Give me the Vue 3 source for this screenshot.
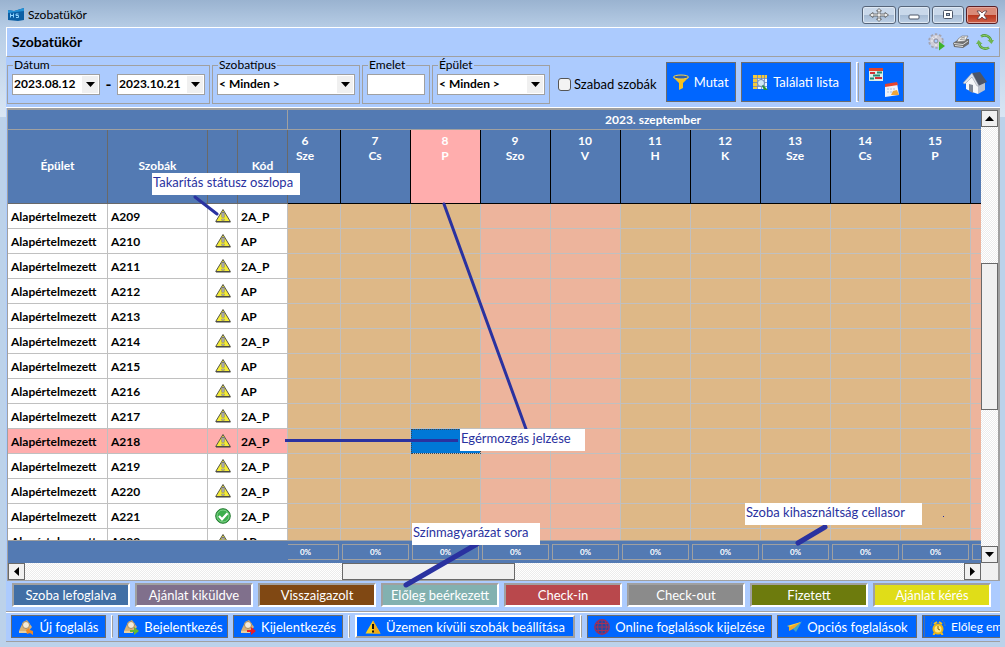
<script setup>
const days = [
  { n: 6, d: 'Sze' }, { n: 7, d: 'Cs' }, { n: 8, d: 'P' }, { n: 9, d: 'Szo', weekend: true },
  { n: 10, d: 'V', weekend: true }, { n: 11, d: 'H' }, { n: 12, d: 'K' }, { n: 13, d: 'Sze' },
  { n: 14, d: 'Cs' }, { n: 15, d: 'P' }, { n: 16, d: 'Szo', weekend: true },
]
const codes = ['2A_P', 'AP', '2A_P', 'AP', 'AP', '2A_P', 'AP', 'AP', '2A_P', '2A_P', '2A_P', '2A_P', '2A_P', 'AP']
const rooms = codes.map((code, i) => ({ name: 'A' + (209 + i), code, clean: i === 12 }))
const hoverRoom = 'A218'
const hoverDay = 8
const legend = [
  ['Szoba lefoglalva', 'booked'], ['Ajánlat kiküldve', 'offer'], ['Visszaigazolt', 'confirmed'],
  ['Előleg beérkezett', 'deposit'], ['Check-in', 'checkin'], ['Check-out', 'checkout'],
  ['Fizetett', 'paid'], ['Ajánlat kérés', 'request'],
]
</script>

<template>
  <div class="window">
    <header class="titlebar">
      <svg class="logo" viewBox="0 0 16 16" width="16" height="16">
        <path d="M0 3l6 1 10-3v12l-6 1-10-1z" fill="#0b5fa5" /><path d="M0 3l6 1 10-3v3L0 6z" fill="#2391d6" />
        <path d="M2.500 6.500v4M5.500 6.500v4M2.500 8.500h3M10.500 7H8v1.500h2.500V10.500H8" fill="none" stroke="#8fd4ff" />
      </svg>
      <span class="caption">Szobatükör</span>
      <button class="wbtn" aria-label="Mozgatás">
        <svg viewBox="0 0 20 14" width="20" height="14"><path d="M10 .5l2.500 2.500H11v3h5V4.500L19.500 7 16 9.500V8h-5v3h1.500L10 13.500 7.500 11H9V8H4v1.500L.5 7 4 4.500V6h5V3H7.500z" fill="#eee" stroke="#555" stroke-width=".8" /></svg>
      </button>
      <button class="wbtn" aria-label="Kis méret">
        <svg viewBox="0 0 12 12" width="12" height="12"><rect x="1" y="6" width="10" height="4" rx="1" fill="#fff" stroke="#4c5668" /></svg>
      </button>
      <button class="wbtn" aria-label="Teljes méret">
        <svg viewBox="0 0 12 12" width="12" height="12"><rect x="1.500" y="1.500" width="9" height="8" rx="1" fill="#fff" stroke="#4c5668" /><rect x="4.500" y="4.500" width="3" height="2" fill="#a9bdd6" stroke="#4c5668" /></svg>
      </button>
      <button class="wbtn close" aria-label="Bezárás">
        <svg viewBox="0 0 12 12" width="12" height="12"><path d="M1 2h3l2 2 2-2h3L8 6l3 4H8L6 8l-2 2H1l3-4z" fill="#fff" stroke="#5b3a40" stroke-width=".8" /></svg>
      </button>
    </header>

    <main class="panel">
      <div class="heading">
        <h1>Szobatükör</h1>
        <button class="plain" aria-label="Beállítások">
          <svg viewBox="0 0 18 18" width="18" height="18">
            <circle cx="8" cy="8" r="6.500" fill="#d2d2dc" stroke="#a4a4b2" stroke-width="2.500" stroke-dasharray="2.400 1.700" />
            <circle cx="8" cy="8" r="6" fill="#cdcdd8" /><circle cx="8" cy="8" r="2" fill="#aaccff" stroke="#8c8c9a" />
            <path d="M8 3v2M8 11v2M3 8h2M4.500 4.500l1.300 1.300" stroke="#f4f4fa" />
            <path d="M11 8.500l6 4.500-6 4.500z" fill="#3db32c" />
          </svg>
        </button>
        <button class="plain" aria-label="Nyomtatás">
          <svg viewBox="0 0 18 18" width="18" height="18">
            <path d="M1 10l6-4 10 0v5l-6 4-9-1z" fill="#6e6e6e" /><path d="M6 6l4-3 6 0-3 5-8 1z" fill="#f0f0f0" stroke="#777" stroke-width=".7" />
            <path d="M2 10.500l9 1 5-3.500M3 12.500l8 1" stroke="#ddd" fill="none" /><path d="M9 5l4-1M8 6.500l5-.5" stroke="#888" stroke-width=".8" />
          </svg>
        </button>
        <button class="plain" aria-label="Frissítés">
          <svg viewBox="0 0 18 18" width="18" height="18">
            <path d="M5 3.500a6.500 6.500 0 0 1 10 4M13 14.500a6.500 6.500 0 0 1-10-4" fill="none" stroke="#559b3c" stroke-width="2.600" />
            <path d="M5 3.500a6.500 6.500 0 0 1 10 4M13 14.500a6.500 6.500 0 0 1-10-4" fill="none" stroke="#8cd06a" />
            <path d="M11.500 7h6.500l-2.500 4zM6.500 11H0l2.500-4z" fill="#6fb552" />
          </svg>
        </button>
      </div>

      <form class="filters" @submit.prevent>
        <fieldset>
          <legend>Dátum</legend>
          <span class="combo date"><input value="2023.08.12" aria-label="Dátum kezdete"><button class="drop" aria-label="Naptár"><svg viewBox="0 0 9 5" width="9" height="5"><path d="M0 0h9L4.500 5z" /></svg></button></span>
          <b class="dash">-</b>
          <span class="combo date"><input value="2023.10.21" aria-label="Dátum vége"><button class="drop" aria-label="Naptár"><svg viewBox="0 0 9 5" width="9" height="5"><path d="M0 0h9L4.500 5z" /></svg></button></span>
        </fieldset>
        <fieldset>
          <legend>Szobatípus</legend>
          <span class="combo type"><select aria-label="Szobatípus"><option>&lt; Minden &gt;</option></select><span class="drop"><svg viewBox="0 0 9 5" width="9" height="5"><path d="M0 0h9L4.500 5z" /></svg></span></span>
        </fieldset>
        <fieldset>
          <legend>Emelet</legend>
          <span class="combo floor"><input aria-label="Emelet"></span>
        </fieldset>
        <fieldset>
          <legend>Épület</legend>
          <span class="combo building"><select aria-label="Épület"><option>&lt; Minden &gt;</option></select><span class="drop"><svg viewBox="0 0 9 5" width="9" height="5"><path d="M0 0h9L4.500 5z" /></svg></span></span>
        </fieldset>
        <label class="check"><input type="checkbox">Szabad szobák</label>
        <div class="actions">
          <button class="blue show">
            <svg viewBox="0 0 16 16" width="16" height="16"><path d="M0 3h16l-6 6v5l-4 2V9z" fill="#f4c020" /><ellipse cx="8" cy="3" rx="7.500" ry="2" fill="#2b5fae" stroke="#f7d34a" /></svg>
            Mutat
          </button>
          <button class="blue list">
            <svg viewBox="0 0 16 16" width="16" height="16">
              <rect x="1" y="1" width="14" height="14" fill="#e8f2ff" /><path d="M1 1h4v14H1zM1 1h14v3H1z" fill="#f3c93a" />
              <path d="M1 4.500h14M1 8.500h14M1 12.500h14M5.500 1v14M9.500 1v14M12.500 1v14" stroke="#6b86b8" stroke-width=".8" />
              <circle cx="9" cy="9" r="3.500" fill="#cfe9f7" stroke="#6b86b8" /><path d="M11 11l5 5h-4l-2-4z" fill="#26923c" />
            </svg>
            Találati lista
          </button>
          <i class="sep"></i>
          <button class="blue square" aria-label="Foglalások">
            <svg viewBox="0 0 36 36" width="36" height="36">
              <rect x="3" y="4" width="14" height="13" fill="#dcefe9" /><path d="M3 4h14v3H3z" fill="#e2442c" />
              <path d="M4 9h5M9 14h7" stroke="#d03238" stroke-width="2" /><path d="M7 11.500h7M11 8.500h5M4 14.500h4" stroke="#208b74" stroke-width="2" />
              <path d="M19 21l12-2 2 12-14 2z" fill="#eef2fa" /><path d="M19 20l12-2 1 3-13 2z" fill="#e4442d" />
              <path d="M21 25h8M21 28h7" stroke="#a8bde0" stroke-dasharray="2 1" /><path d="M25 31l2-4 4-1 2 5z" fill="#f0a63a" />
            </svg>
          </button>
          <button class="blue square home" aria-label="Kezdőlap">
            <svg viewBox="0 0 28 28" width="28" height="28">
              <path d="M5 14l6-7 6 8v11l-6-2-6-3z" fill="#f4f6fa" /><path d="M17 14v12l7-4v-8l-3-3z" fill="#bcc2ce" />
              <path d="M11 5l8-1 7 10-9 4z" fill="#4c5568" /><path d="M2 15l9-10 7 13-2 0-5-9-7 7z" fill="#dfe3eb" stroke="#8d93a1" stroke-width=".5" />
              <path d="M8 16l4 1v8l-4-2z" fill="#7c8595" />
            </svg>
          </button>
        </div>
      </form>

      <section class="grid">
        <div class="content">
          <div class="tables">
            <table class="rooms">
              <colgroup><col class="c100"><col class="c100"><col class="c30"><col class="c50"></colgroup>
              <thead>
                <tr class="month"><th colspan="4"></th></tr>
                <tr class="names"><th>Épület</th><th>Szobák</th><th></th><th>Kód</th></tr>
              </thead>
              <tbody>
                <tr v-for="r in rooms" :key="r.name" :class="{ hover: r.name === hoverRoom }">
                  <td>Alapértelmezett</td><td>{{ r.name }}</td>
                  <td class="status">
                    <svg v-if="r.clean" viewBox="0 0 16 16" width="16" height="16"><circle cx="8" cy="8" r="7.300" fill="#3cae4c" stroke="#257a32" /><circle cx="8" cy="8" r="6" fill="none" stroke="#8fd897" stroke-width=".8" /><path d="M4 8l3 3.300 5.500-6" fill="none" stroke="#fff" stroke-width="2.200" /></svg>
                    <svg v-else viewBox="0 0 16 16" width="16" height="16"><path d="M8 1.500L15.300 13.500H.7z" fill="#f4ec35" stroke="#54544a" stroke-linejoin="round" /><path d="M1 14h14.500" stroke="#44443c" /><path d="M8 4v5.500M8 10.800v1.700" stroke="#77777c" stroke-width="3" /><path d="M8 5v4M8 11v1" stroke="#d8d8da" /></svg>
                  </td>
                  <td>{{ r.code }}</td>
                </tr>
              </tbody>
            </table>
            <div class="calendar">
              <table class="days">
                <colgroup><col v-for="d in days" :key="d.n" class="c70"></colgroup>
                <thead>
                  <tr class="month"><th :colspan="days.length">2023. szeptember</th></tr>
                  <tr class="names"><th v-for="d in days" :key="d.n" :class="{ hover: d.n === hoverDay }">{{ d.n }}<br>{{ d.d }}</th></tr>
                </thead>
                <tbody>
                  <tr v-for="r in rooms" :key="r.name">
                    <td v-for="d in days" :key="d.n" :class="{ weekend: d.weekend, cursor: r.name === hoverRoom && d.n === hoverDay }"></td>
                  </tr>
                </tbody>
              </table>
            </div>
          </div>
          <div class="usage">
            <div class="usage-days"><div class="usage-row"><span v-for="d in days" :key="d.n">0%</span></div></div>
          </div>
        </div>
        <div class="vbar">
          <button class="arrow" aria-label="Fel"><svg viewBox="0 0 9 5" width="9" height="5"><path d="M0 5h9L4.500 0z" /></svg></button>
          <i class="v-before"></i><i class="thumb v-thumb"></i><i class="v-after"></i>
          <button class="arrow" aria-label="Le"><svg viewBox="0 0 9 5" width="9" height="5"><path d="M0 0h9L4.500 5z" /></svg></button>
        </div>
        <div class="hbar">
          <button class="arrow" aria-label="Balra"><svg viewBox="0 0 5 9" width="5" height="9"><path d="M5 0v9L0 4.500z" /></svg></button>
          <i class="h-before"></i><i class="thumb h-thumb"></i><i class="h-after"></i>
          <button class="arrow" aria-label="Jobbra"><svg viewBox="0 0 5 9" width="5" height="9"><path d="M0 0v9l5-4.500z" /></svg></button>
        </div>
        <div class="corner"></div>
      </section>

      <div class="legend"><span v-for="[t, c] in legend" :key="c" :class="c">{{ t }}</span></div>

      <nav class="toolbar">
        <button class="blue w95">
          <svg viewBox="0 0 16 16" width="16" height="16"><path d="M1 12l4-9 4-2 5 7-4 5z" fill="#d9b277" /><circle cx="8" cy="6" r="3.500" fill="#f4ead8" stroke="#a88a60" /><path d="M1 12l9 0v2H1z" fill="#e9cf9e" /><path d="M8 11l3-2 1 2 3 1v4l-3-2-3 1z" fill="#f08a24" /></svg>
          Új foglalás
        </button>
        <i class="sep"></i>
        <button class="blue w110">
          <svg viewBox="0 0 16 16" width="16" height="16"><path d="M1 12l4-9 4-2 5 7-4 5z" fill="#d9b277" /><circle cx="8" cy="6" r="3.500" fill="#f4ead8" stroke="#a88a60" /><path d="M1 12l9 0v2H1z" fill="#e9cf9e" /><path d="M7 11h4V8l5 4-5 4v-3H7z" fill="#62b92e" /></svg>
          Bejelentkezés
        </button>
        <button class="blue w110">
          <svg viewBox="0 0 16 16" width="16" height="16"><path d="M1 12l4-9 4-2 5 7-4 5z" fill="#d9b277" /><circle cx="8" cy="6" r="3.500" fill="#f4ead8" stroke="#a88a60" /><path d="M1 12l9 0v2H1z" fill="#e9cf9e" /><path d="M7 11h4V8l5 4-5 4v-3H7z" fill="#ea1c24" /></svg>
          Kijelentkezés
        </button>
        <i class="sep"></i>
        <button class="blue focus w220">
          <svg viewBox="0 0 16 16" width="16" height="16"><path d="M8 1.500L15.500 14.500H.5z" fill="#fbcf1d" /><path d="M8 1.500L15.500 14.500H8z" fill="#f0a916" /><path d="M8 5v5M8 11.500v2" stroke="#111" stroke-width="2" /></svg>
          Üzemen kívüli szobák beállítása
        </button>
        <i class="sep"></i>
        <button class="blue w185">
          <svg viewBox="0 0 16 16" width="16" height="16"><circle cx="8" cy="8" r="7.200" fill="#1c4ba8" stroke="#953060" stroke-width="1.400" /><path d="M1 8h14M8 1v14M2 4.500h12M2 11.500h12M5 1.500q-3 6.500 0 13M11 1.500q3 6.500 0 13" fill="none" stroke="#a33058" stroke-width="1" /></svg>
          Online foglalások kijelzése
        </button>
        <button class="blue w140">
          <svg viewBox="0 0 16 16" width="16" height="16"><path d="M1 7l14-4-5 8-3-2z" fill="#ffd83a" /><path d="M3 8l0 4 4-2 8-7z" fill="#f2a92b" /><path d="M7 10l3 3 6-11z" fill="#3fa6c8" /></svg>
          Opciós foglalások
        </button>
        <button class="blue w95 last">
          <svg viewBox="0 0 16 16" width="16" height="16"><circle cx="8" cy="10" r="4.500" fill="#ffe680" stroke="#e8b416" stroke-width="2" /><path d="M8 7v3l2 1" fill="none" stroke="#8a6200" /><path d="M4.500 14l-1 2M11.500 14l1 2M4 5l3-2M12 5L9 3" fill="none" stroke="#f5c01c" stroke-width="2" /><path d="M1 7q0-4 3-6M15 7q0-4-3-6" fill="none" stroke="#8a8463" stroke-dasharray="1.500 1" /></svg>
          Előleg em
        </button>
      </nav>
    </main>

    <div class="notes">
      <svg viewBox="0 0 1005 647" width="1005" height="647" stroke="#2a32a0" stroke-linecap="round">
        <path d="M195 197L217 214M444 204L526 429" stroke-width="3" /><path d="M285 440.500H458" stroke-width="3" stroke-linecap="butt" />
        <path d="M477 544L406 585M825 527L798 543" stroke-width="5" /><path d="M943 516.500h1" stroke-width="1" stroke-linecap="butt" />
      </svg>
      <span class="note n1">Takarítás státusz oszlopa</span>
      <span class="note n2">Egérmozgás jelzése</span>
      <span class="note n3">Színmagyarázat sora</span>
      <span class="note n4">Szoba kihasználtság cellasor</span>
    </div>
  </div>
</template>

<style>
body { background: #bcd2ea; }
</style>

<style scoped>
* { box-sizing: border-box; }
.window {
  position: relative; display: flex; flex-direction: column; height: 100vh; overflow: hidden;
  padding: 0 5px 5px 6px; font: 13px/16px Lato, "Liberation Sans", sans-serif; color: #000;
  background: linear-gradient(#9ab3d0, #b7cde6 28px, #d9e6f4 117px, #bcd2ea 117px);
}
button, input, select { font: inherit; color: inherit; margin: 0; padding: 0; border: 0; border-radius: 0; }
svg { display: block; flex: none; }
.titlebar { display: flex; align-items: center; gap: 2px; height: 27px; flex: none; padding: 3px 2px 0 2px; }
.caption { flex: 1; font-size: 12px; margin-left: 2px; }
.wbtn {
  display: flex; align-items: center; justify-content: center; width: 32px; height: 18px;
  border: 1px solid #56657a; border-radius: 3px; box-shadow: inset 0 0 0 1px #dfe9f4;
  background: linear-gradient(#c9d8ea 50%, #a5bad3 50%, #bdd0e6);
}
.wbtn:first-of-type { width: 34px; }
.close { border-color: #5a2026; box-shadow: inset 0 0 0 1px #e6a79b; background: linear-gradient(#d98a78 50%, #b8351c 50%, #cf6048); }
.panel { flex: 1; min-height: 0; display: flex; flex-direction: column; background: #accbfe; border-bottom: 1px solid #a0a0a0; }
.heading {
  display: flex; align-items: center; gap: 6px; height: 30px; flex: none; padding: 0 5px;
  border: 1px solid #fff; border-right-color: #a0a0a0; border-bottom-color: #a0a0a0;
}
.heading h1 { flex: 1; margin: 0; font-size: 14px; font-weight: bold; }
.plain { background: none; }
.filters { display: flex; align-items: flex-start; gap: 2px; height: 51px; flex: none; padding: 0 5px 0 1px; border-bottom: 1px solid #fff; }
fieldset { display: flex; align-items: center; margin: 0; padding: 0 4px 8px; border: 1px solid #a0a0a0; min-width: 0; height: 47px; flex: none; }
legend { padding: 0 1px; margin-left: 1px; font-size: 12px; }
.combo { display: flex; align-items: center; height: 21px; border: 1px solid #a0a0a0; background: #fff; font-weight: bold; font-size: 12px; }
.combo input, .combo select { flex: 1; width: 100%; min-width: 0; height: 19px; padding: 0 1px 1px; background: #fff; appearance: none; outline: 0; }
.date { width: 88px; }
.type { width: 138px; }
.floor { width: 58px; }
.building { width: 108px; }
.drop { display: flex; align-items: center; justify-content: center; width: 16px; height: 17px; margin-right: 1px; background: #f0f0f0; flex: none; pointer-events: none; }
.dash { width: 17px; text-align: center; font-size: 16px; }
.check { display: flex; align-items: center; gap: 3px; margin: 19px 0 0 6px; white-space: nowrap; }
.check input { appearance: none; width: 13px; height: 13px; border: 1px solid #555; border-radius: 3px; background: #f3f3f3; }
.actions { display: flex; flex: 1; gap: 5px; margin: 5px 0 0 7px; }
.blue {
  display: flex; align-items: center; justify-content: center; gap: 5px; white-space: nowrap; flex: none;
  background: #0066ff; border: 1px solid #6c6c6c; color: #fff; font-size: 13px;
}
.actions .blue { height: 40px; }
.show { width: 70px; }
.list { width: 110px; }
.square { width: 40px; }
.home { margin-left: auto; }
.sep { width: 3px; flex: none; border: 1px solid #fff; border-right-color: #a0a0a0; background: #accbfe; }
.toolbar .sep { width: 2px; border-width: 1px 1px 1px 1px; }
.grid {
  flex: 1; min-height: 0; display: grid; grid-template: minmax(0, 1fr) 17px / minmax(0, 1fr) 17px;
  margin-left: 1px; border: 1px solid #a0a0a0; border-width: 2px 2px 1px 1px; background: #f0f0f0;
}
.content { display: flex; flex-direction: column; min-height: 0; }
.tables { flex: 1; min-height: 0; overflow: hidden; display: flex; align-items: flex-start; }
.calendar { flex: 1; min-width: 0; overflow: hidden; }
table { table-layout: fixed; border-collapse: separate; border-spacing: 0; font-size: 12px; font-weight: bold; flex: none; }
.rooms { width: 280px; }
.days { width: 770px; margin-left: -17px; }
.c100 { width: 100px; }
.c70 { width: 70px; }
.c50 { width: 50px; }
.c30 { width: 30px; }
th, td { padding: 0; overflow: hidden; white-space: nowrap; }
th { background: #537ab3; color: #fff; }
.month th { height: 20px; padding-right: 5px; border-right: 1px solid #a0a0a0; border-bottom: 1px solid #a0a0a0; line-height: 15px; }
.names th { height: 74px; padding-bottom: 2px; border-right: 1px solid #696969; border-bottom: 1px solid #696969; }
.days .names th { vertical-align: top; padding: 3px 1px 0 0; line-height: 15px; border-color: #000; }
.days .names .hover { background: #ffadad; }
td { height: 25px; border-right: 1px solid #c0c0c0; border-bottom: 1px solid #c0c0c0; line-height: 16px; }
.rooms td { background: #fff; padding: 2px 0 0 3px; }
.rooms .hover td { background: #ffadad; }
.rooms .status { padding: 0 0 0 7px; }
.days td { background: #deb887; }
.days .weekend { background: #edb49c; }
.days .cursor { background: #0078d7; outline: 1px dotted #444; outline-offset: -1px; }
.usage { display: flex; height: 23px; flex: none; padding-left: 280px; background: #537ab3; border-top: 1px solid #a0a0a0; }
.usage-days { flex: 1; min-width: 0; overflow: hidden; }
.usage-row { display: flex; gap: 3px; margin: 3px 0 0 -16px; }
.usage span { width: 67px; height: 16px; flex: none; border: 1px solid #a0a0a0; color: #fff; text-align: center; font-size: 8px; line-height: 14px; font-weight: bold; }
.vbar, .hbar { display: flex; background: repeating-conic-gradient(#fff 0 25%, #ececec 0 50%) 0 0 / 2px 2px; }
.vbar { flex-direction: column; }
.arrow { display: flex; align-items: center; justify-content: center; width: 17px; height: 17px; flex: none; background: #f0f0f0; border: 1px solid #696969; }
.thumb { background: #f0f0f0; border: 1px solid #696969; }
.v-before, .v-after { flex: 136; }
.v-thumb { flex: 146; }
.h-before { flex: 317; }
.h-thumb { flex: 172; }
.h-after { flex: 449; }
.legend { display: grid; grid-template-columns: repeat(8, minmax(0, 1fr)); gap: 5px; flex: none; height: 31px; padding: 2px 9px 4px 6px; border-bottom: 1px solid #a0a0a0; }
.legend span { border: 2px solid #a0a0a0; border-right-color: #fff; border-bottom-color: #fff; color: #fff; text-align: center; line-height: 20px; white-space: nowrap; }
.booked { background: #426fa5; }
.offer { background: #80708c; }
.confirmed { background: #804813; }
.deposit { background: #82b1b0; }
.checkin { background: #b9484c; }
.checkout { background: #8b8b8b; }
.paid { background: #6d7b0d; }
.request { background: #e0dd18; }
.toolbar { display: flex; gap: 5px; flex: none; height: 29px; padding: 2px 0 3px 5px; border-top: 1px solid #fff; overflow: hidden; }
.toolbar .focus { border: 2px solid #fff; border-right-color: #a0a0a0; border-bottom-color: #a0a0a0; }
.w95 { width: 95px; }
.w110 { width: 110px; }
.w140 { width: 140px; }
.w185 { width: 185px; }
.w220 { width: 220px; }
.toolbar .last { justify-content: flex-start; padding-left: 7px; font-size: 12px; box-shadow: inset 1px 0 #0066ff, inset 2px 0 #4b6fa8; }
.notes { position: absolute; inset: 0; pointer-events: none; }
.note { position: absolute; height: 22px; padding-left: 1px; background: #fff; color: #2a32a0; font-size: 13px; line-height: 19px; white-space: nowrap; }
.n1 { left: 152px; top: 173px; width: 148px; }
.n2 { left: 460px; top: 429px; width: 125px; }
.n3 { left: 412px; top: 523px; width: 128px; }
.n4 { left: 745px; top: 503px; width: 177px; }
</style>
